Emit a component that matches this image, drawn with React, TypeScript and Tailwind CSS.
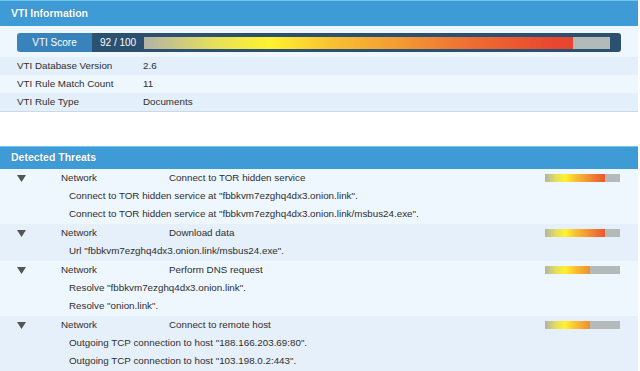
import React from "react";

const grad =
  "linear-gradient(to right, #b3b3a6 0%, #e6df5c 15%, #fff22e 27%, #f8c232 40%, #f39a33 55%, #ee6e33 70%, #e9462f 88%, #e8402e 100%)";

function Bar({ pct, w, h }: { pct: number; w: number; h: number }) {
  return (
    <div className="relative bg-[#b4b9b9]" style={{ width: w, height: h }}>
      <div className="absolute left-0 top-0 h-full overflow-hidden" style={{ width: `${pct}%` }}>
        <div className="h-full" style={{ width: w, backgroundImage: grad }} />
      </div>
    </div>
  );
}

const threats = [
  {
    cat: "Network",
    title: "Connect to TOR hidden service",
    pct: 80,
    lines: [
      'Connect to TOR hidden service at "fbbkvm7ezghq4dx3.onion.link".',
      'Connect to TOR hidden service at "fbbkvm7ezghq4dx3.onion.link/msbus24.exe".',
    ],
  },
  {
    cat: "Network",
    title: "Download data",
    pct: 80,
    lines: ['Url "fbbkvm7ezghq4dx3.onion.link/msbus24.exe".'],
  },
  {
    cat: "Network",
    title: "Perform DNS request",
    pct: 60,
    lines: ['Resolve "fbbkvm7ezghq4dx3.onion.link".', 'Resolve "onion.link".'],
  },
  {
    cat: "Network",
    title: "Connect to remote host",
    pct: 60,
    lines: [
      'Outgoing TCP connection to host "188.166.203.69:80".',
      'Outgoing TCP connection to host "103.198.0.2:443".',
    ],
  },
];

export default function App() {
  const font = { fontFamily: '"Liberation Sans", Arial, sans-serif' };
  return (
    <div className="w-[640px] h-[371px] overflow-hidden bg-white text-[#2e2e2e]" style={font}>
      <div className="w-[638px]">
        {/* VTI Information */}
        <div className="h-[26px] bg-[#3e9bd5] border-t border-[#72c6ee] flex items-center pl-[11px]">
          <span className="text-white font-bold text-[10.5px] [text-shadow:0_0_1px_rgba(0,0,0,0.25)]">VTI Information</span>
        </div>
        <div className="bg-[#eef6fe] pt-[7px] border-b border-[#cbd9e6]">
          <div className="ml-[17px] mr-[17px] h-[19px] flex rounded-[3px] overflow-hidden mb-[5px]">
            <div className="w-[75px] bg-[#3983bd] text-white text-[10px] flex items-center justify-center">VTI Score</div>
            <div className="flex-1 bg-[#2c5170] flex items-center pr-[11px]">
              <span className="text-white text-[10px] w-[52px] pl-[8px]">92 / 100</span>
              <Bar pct={92} w={466} h={12} />
            </div>
          </div>
          {[
            ["VTI Database Version", "2.6", "bg-[#e3effa]"],
            ["VTI Rule Match Count", "11", "bg-[#eef6fe]"],
            ["VTI Rule Type", "Documents", "bg-[#e3effa]"],
          ].map(([k, v, bg]) => (
            <div key={k} className={`h-[18px] flex items-center text-[9.8px] ${bg}`}>
              <span className="pl-[17px] w-[143px]">{k}</span>
              <span>{v}</span>
            </div>
          ))}
        </div>

        <div className="h-[34px]" />

        {/* Detected Threats */}
        <div className="h-[23px] bg-[#3e9bd5] border-t border-[#72c6ee] flex items-center pl-[11px]">
          <span className="text-white font-bold text-[10.5px] [text-shadow:0_0_1px_rgba(0,0,0,0.25)]">Detected Threats</span>
        </div>
        {threats.map((t, i) => (
          <div key={i} className={`pb-[1px] text-[9.8px] ${i % 2 === 0 ? "bg-[#eef6fe]" : "bg-[#e6f0fa]"}`}>
            <div className="h-[18px] flex items-center">
              <div className="w-[61px] pl-[17px] flex items-center">
                <svg width="9" height="7" viewBox="0 0 9 7">
                  <path d="M0 0 H9 L4.5 7 Z" fill="#555" />
                </svg>
              </div>
              <span className="w-[108px]">{t.cat}</span>
              <span className="flex-1">{t.title}</span>
              <div className="mr-[18px]">
                <Bar pct={t.pct} w={75} h={8} />
              </div>
            </div>
            {t.lines.map((l, j) => (
              <div key={j} className="h-[18px] flex items-center pl-[69px]">
                {l}
              </div>
            ))}
          </div>
        ))}
      </div>
    </div>
  );
}
